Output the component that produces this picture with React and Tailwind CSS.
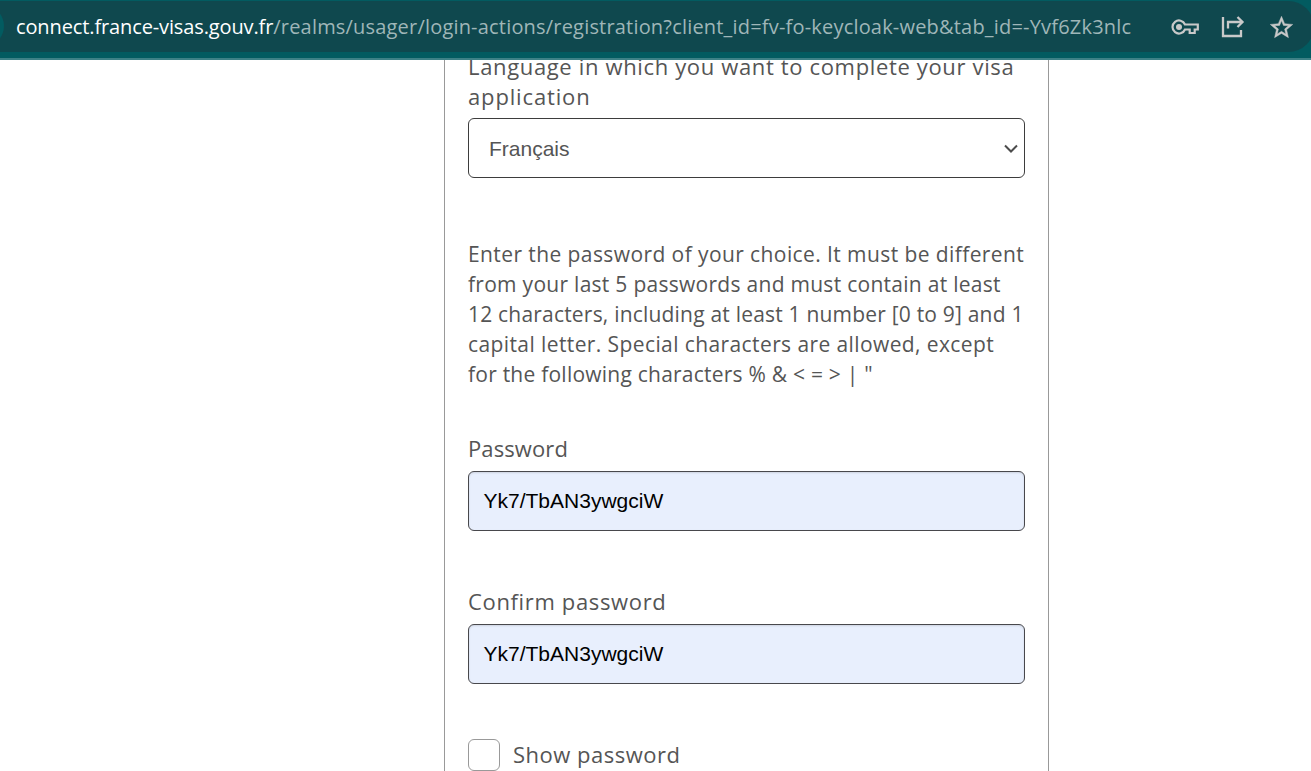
function Line({ children, className = "" }) {
  return <span className={"block w-fit whitespace-nowrap " + className}>{children}</span>;
}

const labelText = "font-['Open_Sans',sans-serif] text-[22px] leading-[30px] text-[#555]";

function KeyIcon() {
  return (
    <svg width="30" height="18" viewBox="0 0 30 18" fill="none" stroke="#c9c9c9" strokeWidth="2.2">
      <path d="M15 6.5A6.5 6.5 0 1 0 15 11.5H19.7V15H24.7V11.5H27.8V6.5Z" />
      <circle cx="9" cy="9" r="3" fill="#c9c9c9" stroke="none" />
    </svg>
  );
}

function ShareIcon() {
  return (
    <svg width="24" height="22" viewBox="0 0 24 22" fill="none" stroke="#c9c9c9" strokeWidth="2.3">
      <path d="M2 1V20H20V14" />
      <path d="M7 12.5V6H21" />
      <path d="M16.5 1L21.5 6L16.5 11" />
    </svg>
  );
}

function StarIcon() {
  return (
    <svg className="ml-[22.5px] mt-px" width="27" height="27" viewBox="0 0 24 24" fill="#c9c9c9" stroke="#c9c9c9" strokeWidth="0.4">
      <path d="M22 9.24l-7.19-.62L12 2 9.19 8.63 2 9.24l5.46 4.73L5.82 21 12 17.27 18.18 21l-1.63-7.03L22 9.24zM12 15.4l-3.76 2.27 1-4.28-3.32-2.88 4.38-.38L12 6.1l1.71 4.04 4.38.38-3.32 2.88 1 4.28L12 15.4z" />
    </svg>
  );
}

function PasswordField({ value }) {
  return (
    <div className="mt-2 flex h-[60px] items-center rounded-[6px] border border-[#48484c] bg-[#e8effd] pl-[14.5px] font-['Liberation_Sans',sans-serif] text-[21px] text-black shadow-[inset_0_1px_2px_rgba(0,0,0,0.12)]">
      {value}
    </div>
  );
}

export default function App() {
  return (
    <div className="flex h-[771px] w-[1311px] flex-col overflow-hidden bg-white">
      <header className="h-[60px] shrink-0 overflow-hidden border-b-2 border-[#3d8186] bg-[#025b60]">
        <div className="relative -mr-[3px] mt-px flex h-[51px] items-center rounded-r-full bg-[#0f484e] pl-4">
          <span className="absolute -left-[38px] top-1 size-[42px] rounded-full bg-[#025b60]" />
          <p className="flex w-[1154px] whitespace-nowrap font-['Open_Sans',sans-serif] text-[20px] leading-[30px]">
            <Line className="tracking-[-0.12px] text-white">connect.france-visas.gouv.fr</Line>
            <Line className="tracking-[0.19px] text-[#9fb6b8]">/realms/usager/login-actions/registration?client_id=fv-fo-keycloak-web&amp;tab_id=-Yvf6Zk3nlc</Line>
          </p>
          <KeyIcon />
          <div className="ml-[21px]"><ShareIcon /></div>
          <StarIcon />
        </div>
      </header>
      <main className="ml-[444px] w-[605px] flex-1 overflow-hidden border-x border-[#999] px-[23px]">
        <div className={labelText + " -mt-[9px]"}>
          <Line className="tracking-[0.65px]">Language in which you want to complete your visa</Line>
          <Line className="tracking-[0.85px]">application</Line>
        </div>
        <div className="mt-[7px] flex h-[60px] items-center justify-between rounded-[6px] border border-[#3d3d3d] pl-5 pr-1.5 pt-px font-['Liberation_Sans',sans-serif] text-[21px] text-[#555]">
          Français
          <svg width="14" height="10" viewBox="0 0 14 10" fill="none" stroke="#4c4c4c" strokeWidth="2">
            <path d="M1 1.5L7 7.5L13 1.5" />
          </svg>
        </div>
        <div className="mt-[61px] font-['Open_Sans',sans-serif] text-[21px] leading-[30px] text-[#555]">
          <Line className="tracking-[0.41px]">Enter the password of your choice. It must be different</Line>
          <Line className="tracking-[0.28px]">from your last 5 passwords and must contain at least</Line>
          <Line className="tracking-[0.2px]">12 characters, including at least 1 number [0 to 9] and 1</Line>
          <Line className="tracking-[0.4px]">capital letter. Special characters are allowed, except</Line>
          <Line className="tracking-[0.23px]">for the following characters % &amp; &lt; = &gt; | "</Line>
        </div>
        <div className={labelText + " mt-11"}><Line className="tracking-[0.1px]">Password</Line></div>
        <PasswordField value="Yk7/TbAN3ywgciW" />
        <div className={labelText + " mt-[55px]"}><Line className="tracking-[0.65px]">Confirm password</Line></div>
        <PasswordField value="Yk7/TbAN3ywgciW" />
        <div className={labelText + " mt-[55px] flex items-center gap-[13px]"}>
          <span className="size-8 rounded-[6px] border border-[#999]" />
          <Line className="pb-0.5 tracking-[0.5px]">Show password</Line>
        </div>
      </main>
    </div>
  );
}
